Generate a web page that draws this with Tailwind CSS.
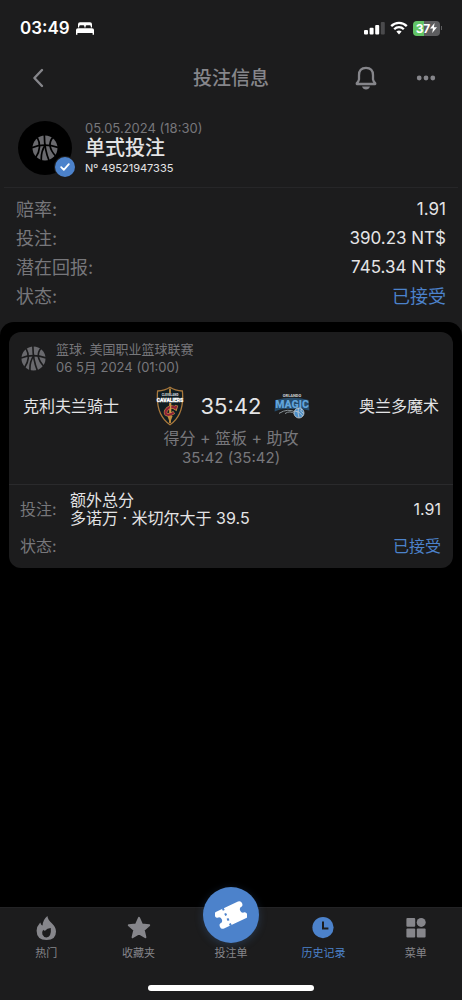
<!DOCTYPE html>
<html lang="zh-Hans">
<head>
    <meta charset="UTF-8">
    <meta name="viewport" content="width=device-width, initial-scale=1.0">
    <title>投注信息</title>
    <script src="https://cdn.jsdelivr.net/npm/@tailwindcss/browser@4"></script>
</head>
<body class="min-h-screen flex flex-col bg-[#1c1c1d] text-[#e4e4e6] font-[Inter,'Noto_Sans_CJK_SC',sans-serif]">

<!-- Status bar -->
<div class="h-14 flex items-center justify-between px-5 text-white">
    <div class="flex items-center gap-[6px]">
        <span class="text-[17px] leading-6 font-semibold">03:49</span>
        <svg class="w-[18px] h-[13px]" viewBox="0 0 18 13" fill="currentColor" aria-hidden="true">
            <path d="M2 5.4V2.2Q2 .3 4 .3H14Q16 .3 16 2.2V5.4H14.8V4.4Q14.8 3.2 13.6 3.2H10.8Q9.6 3.2 9.6 4.4V5.4H8.4V4.4Q8.4 3.2 7.2 3.2H4.4Q3.2 3.2 3.2 4.4V5.4Z"/>
            <path d="M0 12.8V8Q0 6.2 2 6.2H16Q18 6.2 18 8V12.8H16.6V11H1.4V12.8Z"/>
        </svg>
    </div>
    <div class="flex items-center gap-[5px]">
        <svg class="w-[21px] h-[14px]" viewBox="0 0 21 14" fill="currentColor" aria-hidden="true">
            <rect x="0" y="9" width="4" height="4.6" rx="1"/>
            <rect x="5.6" y="6.8" width="4" height="6.8" rx="1"/>
            <rect x="11.2" y="4" width="4" height="9.6" rx="1"/>
            <rect x="16.8" y="1" width="4" height="12.6" rx="1" fill="#4a4a4c"/>
        </svg>
        <svg class="w-[18px] h-[14px]" viewBox="0 0 18 14" fill="none" stroke="currentColor" stroke-width="2.3" aria-hidden="true">
            <path d="M1.2 5.1A11 11 0 0 1 16.8 5.1"/>
            <path d="M4.2 8.2A6.8 6.8 0 0 1 13.8 8.2"/>
            <path d="M6.4 10.6A3.8 3.8 0 0 1 11.6 10.6L9 13.4Z" fill="currentColor" stroke="none"/>
        </svg>
        <div class="flex items-center gap-px">
            <div class="h-[15px] w-[27px] flex items-center justify-center rounded-[4px] bg-linear-to-r from-[#62c466] from-40% to-[#5d5d5f] to-40%">
                <span class="text-[12px] leading-[15px] font-bold">37</span>
                <svg class="w-[7px] h-[10px]" viewBox="0 0 7 10" fill="currentColor" aria-hidden="true"><path d="M4.6 0L0 5.6H3L2.2 10L7 4.2H3.9Z"/></svg>
            </div>
            <div class="w-px h-1 bg-[#5d5d5f]"></div>
        </div>
    </div>
</div>

<header class="h-11 grid grid-cols-[1fr_auto_1fr] items-center px-[14px] text-[#86868b]">
    <button type="button" aria-label="返回" class="w-12 h-11 flex items-center justify-center">
        <svg class="w-3 h-5" viewBox="0 0 12 20" fill="none" stroke="currentColor" stroke-width="2.4" stroke-linecap="round" stroke-linejoin="round"><path d="M10 2L2.4 10L10 18"/></svg>
    </button>
    <h1 class="pt-[2px] text-[19px] leading-6 font-medium">投注信息</h1>
    <div class="flex justify-end gap-4">
        <button type="button" aria-label="通知" class="w-11 h-11 flex items-center justify-center">
            <svg class="w-[22px] h-6" viewBox="0 0 22 24" fill="none" stroke="currentColor" stroke-width="2.3" stroke-linejoin="round" stroke-linecap="round">
                <path d="M4 9.2Q4 1.8 11 1.8Q18 1.8 18 9.2V13.4Q18.2 15 20.2 17.2V18H1.8V17.2Q3.8 15 4 13.4Z"/>
                <path d="M7 20.4H15Q14 23.4 11 23.4Q8 23.4 7 20.4Z" fill="currentColor" stroke="none"/>
            </svg>
        </button>
        <button type="button" aria-label="更多" class="w-11 h-11 flex items-center justify-center">
            <svg class="w-5 h-5" viewBox="0 0 20 20" fill="currentColor"><circle cx="3.2" cy="10" r="2.4"/><circle cx="10" cy="10" r="2.4"/><circle cx="16.8" cy="10" r="2.4"/></svg>
        </button>
    </div>
</header>

<!-- Bet summary -->
<section class="pb-[11px]">
    <div class="flex items-center gap-[13px] pl-[18px] pt-[19px] pb-[10px]">
        <div class="relative w-[54px] h-[54px] rounded-full bg-black flex items-center justify-center text-[#6a6a6e]">
            <svg class="w-[26px] h-[26px]" viewBox="0 0 26 26" aria-hidden="true">
                <circle cx="13" cy="13" r="12.5" fill="currentColor"/>
                <g fill="none" stroke="#000000" stroke-width="1.7">
                    <path d="M12.4 0Q12.2 14 17.2 26"/>
                    <path d="M0 12.6Q12 7.6 26 12.4"/>
                    <path d="M5.2 2.4Q10.6 12 3.8 22.4"/>
                    <path d="M20.8 2.4Q14 10.6 23.6 21"/>
                    <path d="M13.2 10Q8.6 17 9.4 26"/>
                </g>
            </svg>
            <div class="absolute -right-[3px] -bottom-[2px] w-5 h-5 rounded-full bg-[#4c82cb] ring-1 ring-[#1c1c1d] flex items-center justify-center">
                <svg class="w-[10px] h-2" viewBox="0 0 10 8" fill="none" stroke="#ffffff" stroke-width="1.8" stroke-linecap="round" stroke-linejoin="round" aria-hidden="true"><path d="M1.2 4.2L3.8 6.8L8.8 1.2"/></svg>
            </div>
        </div>
        <div>
            <p class="text-[13px] leading-[18px] text-[#77777b]">05.05.2024 (18:30)</p>
            <h2 class="text-[20px] leading-[22px] font-medium">单式投注</h2>
            <p class="text-[11px] leading-[18px]">Nº 49521947335</p>
        </div>
    </div>
    <dl class="mx-1 px-3 pt-[7px] border-t border-[#262628] text-[18px] leading-[29px]">
        <div class="flex justify-between"><dt class="text-[#77777b]">赔率:</dt><dd class="text-[17px]">1.91</dd></div>
        <div class="flex justify-between"><dt class="text-[#77777b]">投注:</dt><dd class="text-[17px]">390.23 NT$</dd></div>
        <div class="flex justify-between"><dt class="text-[#77777b]">潜在回报:</dt><dd class="text-[17px]">745.34 NT$</dd></div>
        <div class="flex justify-between"><dt class="text-[#77777b]">状态:</dt><dd class="text-[#4c82cb]">已接受</dd></div>
    </dl>
</section>

<!-- Event card -->
<main class="flex-1 bg-black rounded-t-[14px] px-[9px] pt-[10px]">
    <article class="bg-[#1c1c1d] rounded-xl">
        <div class="flex items-center gap-[10px] pt-2 pl-3 text-[#6a6a6e]">
            <svg class="w-[25px] h-[25px]" viewBox="0 0 26 26" aria-hidden="true">
                <circle cx="13" cy="13" r="12.5" fill="currentColor"/>
                <g fill="none" stroke="#1c1c1d" stroke-width="1.7">
                    <path d="M12.4 0Q12.2 14 17.2 26"/>
                    <path d="M0 12.6Q12 7.6 26 12.4"/>
                    <path d="M5.2 2.4Q10.6 12 3.8 22.4"/>
                    <path d="M20.8 2.4Q14 10.6 23.6 21"/>
                    <path d="M13.2 10Q8.6 17 9.4 26"/>
                </g>
            </svg>
            <div class="text-[13px] leading-[18px] text-[#77777b]">
                <p>篮球. 美国职业篮球联赛</p>
                <p>06 5月 2024 (01:00)</p>
            </div>
        </div>

        <div class="mt-[10px] h-10 px-[14px] grid grid-cols-[1fr_36px_86px_36px_1fr] items-center">
            <p class="text-[16px] leading-5">克利夫兰骑士</p>
            <svg class="w-7 h-10 justify-self-center" viewBox="0 0 28 40" role="img" aria-label="Cleveland Cavaliers">
                <path d="M14 1.2Q19 4.6 26.4 5Q28.6 29 14 38.8Q-.6 29 1.6 5Q9 4.6 14 1.2Z" fill="#101d22" stroke="#a9783c" stroke-width="1.3"/>
                <path d="M14 2.4V7M14 17V37" stroke="#c08a3e" stroke-width="1.8"/>
                <path d="M11.4 30L14 37L16.6 30Z" fill="#c08a3e"/>
                <path d="M20.6 19.2L19.6 22.6Q15.4 19.6 11.6 22.6Q8.4 25.8 10 28Q12.6 30.2 18.2 26.4" fill="none" stroke="#c08a3e" stroke-width="3.4"/>
                <path d="M20.4 19.8L19.4 22.2Q15.4 19.6 11.6 22.6Q8.4 25.8 10 28Q12.6 30.2 17.8 26.6" fill="none" stroke="#8c2038" stroke-width="2.2"/>
                <path d="M14.6 17V27" stroke="#d09a48" stroke-width="1.4"/>
                <text x="14" y="9.6" text-anchor="middle" font-family="Roboto" font-size="3" font-weight="800" fill="#d8dcdd">CLEVELAND</text>
                <text x="14" y="15.8" text-anchor="middle" font-family="Roboto" font-size="5" font-weight="900" fill="#ffffff" stroke="#ffffff" stroke-width=".3">CAVALIERS</text>
            </svg>
            <p class="text-center text-[22px] leading-7">35:42</p>
            <svg class="w-9 h-[26px] justify-self-center" viewBox="0 0 36 26" role="img" aria-label="Orlando Magic">
                <path d="M1.4 7Q18 2.6 34.6 7L35.4 17.6Q29 15.8 24 16L12 16Q6 16 .6 18.4Z" fill="#254b6b"/>
                <text x="18" y="4.4" text-anchor="middle" font-family="Roboto" font-size="4" font-weight="800" fill="#c9ced2">ORLANDO</text>
                <text x="18" y="15.2" text-anchor="middle" font-family="Roboto" font-size="10.5" font-weight="900" fill="#62a5dc">MAGIC</text>
                <path d="M5 20.4Q14 14.6 22 19.4M11 20.6Q16 17 21 21" fill="none" stroke="#8b9499" stroke-width="1"/>
                <circle cx="25" cy="20" r="5" fill="#4c8fc8" stroke="#c5ccd1" stroke-width=".8"/>
                <path d="M21 18Q25.4 18 28.8 23M24.4 15Q23.4 20 25 24.6M28 16Q25 18 29.8 20.4" fill="none" stroke="#c5ccd1" stroke-width=".8"/>
            </svg>
            <p class="text-right text-[16px] leading-5">奥兰多魔术</p>
        </div>

        <div class="mt-[3px] pb-[17px] text-center text-[16px] leading-[19px] text-[#77777b]">
            <p>得分 + 篮板 + 助攻</p>
            <p class="text-[15px]">35:42 (35:42)</p>
        </div>

        <dl class="border-t border-[#2a2a2c] pl-[11px] pr-3 pt-[6px] pb-3 text-[16px]">
            <div class="flex items-center">
                <dt class="w-[50px] text-[#77777b]">投注:</dt>
                <dd class="flex-1 flex items-center justify-between">
                    <div class="leading-[18px]">
                        <p>额外总分</p>
                        <p>多诺万 · 米切尔大于 39.5</p>
                    </div>
                    <span>1.91</span>
                </dd>
            </div>
            <div class="mt-[9px] flex items-center justify-between leading-5">
                <dt class="text-[#77777b]">状态:</dt>
                <dd class="text-[#4c82cb]">已接受</dd>
            </div>
        </dl>
    </article>
</main>

<!-- Tab bar -->
<footer class="bg-[#1c1c1d] border-t border-[#232325]">
    <nav class="grid grid-cols-5 pt-2 text-[11px] leading-4 text-[#86868b]">
        <a href="#hot" class="flex flex-col items-center gap-[5px]">
            <svg class="w-6 h-6" viewBox="0 0 24 24" fill="currentColor" aria-hidden="true">
                <path fill-rule="evenodd" d="M13.4 0Q13.8 3.8 17.8 7.2Q22 11 22 15.4Q22 24 12.6 24Q2.6 24 2.6 14.8Q2.6 10.6 6.2 6.6Q7 9.2 8.6 9.6Q8.6 4 13.4 0ZM16.8 12Q13.2 12 11 14.8Q9.8 14.8 9.2 13.8Q7.6 16 8.4 18.6Q9.6 21.4 12.4 21.4Q17.6 21 16.8 12Z"/>
            </svg>
            <span>热门</span>
        </a>
        <a href="#favorites" class="flex flex-col items-center gap-[5px]">
            <svg class="w-6 h-6" viewBox="0 0 24 24" fill="currentColor" stroke="currentColor" stroke-width="2" stroke-linejoin="round" aria-hidden="true">
                <path d="M12 1.8L14.9 8.5L22.2 9.2L16.7 14L18.4 21.2L12 17.4L5.6 21.2L7.3 14L1.8 9.2L9.1 8.5Z"/>
            </svg>
            <span>收藏夹</span>
        </a>
        <a href="#slip" class="flex flex-col items-center gap-[2px]">
            <span class="-mt-[29px] w-14 h-14 rounded-full bg-[#4c82cb] flex items-center justify-center shadow-[0_2px_8px_rgba(76,130,203,0.25)]">
                <svg class="w-8 h-7" viewBox="0 0 32 28" fill="#ffffff" aria-hidden="true">
                    <g transform="rotate(-25 16 14)">
                        <path d="M4 4.8H28Q31 4.8 31 7.8Q31 10.4 29.4 10.8A3.2 3.2 0 0 0 29.4 17.2Q31 17.6 31 20.2Q31 23.2 28 23.2H4Q1 23.2 1 20.2Q1 17.6 2.6 17.2A3.2 3.2 0 0 0 2.6 10.8Q1 10.4 1 7.8Q1 4.8 4 4.8Z"/>
                        <path d="M11.4 4.4V23.6" stroke="#4c82cb" stroke-width="2" stroke-dasharray="2.4 3.2"/>
                    </g>
                </svg>
            </span>
            <span>投注单</span>
        </a>
        <a href="#history" aria-current="page" class="flex flex-col items-center gap-[5px] text-[#4c82cb]">
            <svg class="w-6 h-6" viewBox="0 0 24 24" aria-hidden="true">
                <circle cx="12" cy="11.6" r="10.6" fill="currentColor"/>
                <path d="M12 5.4V12.6H17.4" fill="none" stroke="#1c1c1d" stroke-width="2"/>
            </svg>
            <span>历史记录</span>
        </a>
        <a href="#menu" class="flex flex-col items-center gap-[5px]">
            <svg class="w-6 h-6" viewBox="0 0 24 24" fill="currentColor" aria-hidden="true">
                <rect x="2.4" y="2" width="8.8" height="8.8" rx="1"/>
                <circle cx="17.2" cy="6.4" r="4.5"/>
                <rect x="2.4" y="12.6" width="8.8" height="8.8" rx="1"/>
                <rect x="12.8" y="12.6" width="8.8" height="8.8" rx="1"/>
            </svg>
            <span>菜单</span>
        </a>
    </nav>
    <div class="mx-auto mt-6 mb-[9px] w-[166px] h-[6px] rounded-full bg-white"></div>
</footer>

</body>
</html>
